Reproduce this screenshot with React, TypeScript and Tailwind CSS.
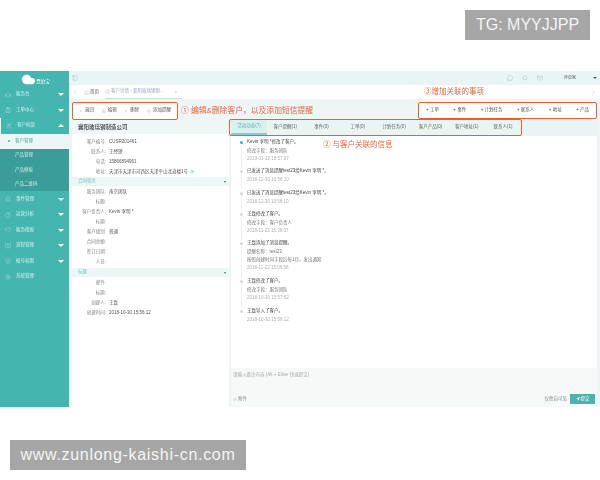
import React from 'react'
import { ArrowLeft, Bell, BookOpen, Cloud, FileText, Heart, Home, Mail, MapPin, MessageCircle, Paperclip, PanelLeft, PieChart, Send, Settings, ShieldCheck, SquarePen, Users, X, ChevronLeft, ChevronRight, ClipboardList, Headphones } from 'lucide-react'

const cjk = 'font-["Liberation_Sans","Noto_Sans_CJK_SC",sans-serif]'

const menuTop = [
  { icon: Headphones, label: '服务台' },
  { icon: ClipboardList, label: '工单中心' },
]
const menuBottom = [
  { icon: Bell, label: '事件管理', arrow: true },
  { icon: PieChart, label: '运营分析', arrow: true },
  { icon: Heart, label: '服务搜报', arrow: true },
  { icon: BookOpen, label: '流程管理', arrow: true },
  { icon: ShieldCheck, label: '帐号权限', arrow: true },
  { icon: Settings, label: '系统管理', arrow: false },
]
const subItems = ['产品管理', '产品模板', '产品二维码']

const Caret = ({ up }: { up?: boolean }) => (
  <span className={`ml-auto mr-[5px] h-0 w-0 border-x-[3px] border-x-transparent ${up ? 'border-b-[3px] border-b-white' : 'border-t-[3px] border-t-white'}`} />
)

function Sidebar() {
  const row = 'flex h-[15.5px] items-center pl-[5px] text-[4.5px] text-[#d6f0ee]'
  return (
    <div className="flex w-[69px] shrink-0 flex-col bg-[#45b5b0]">
      <div className="flex h-[16px] items-center justify-center pl-[2px] pt-[1px] text-[4.5px] text-white">
        <Cloud size={15} fill="#ffffff" strokeWidth={1} />
        <span className="mt-[5px]">票拍宝</span>
      </div>
      {menuTop.map((m) => (
        <div key={m.label} className={row}>
          <m.icon size={6} strokeWidth={1.2} />
          <span className="ml-[5px]">{m.label}</span>
          <Caret />
        </div>
      ))}
      <div className={`${row} border-l border-white`}>
        <Users size={6} strokeWidth={1.2} />
        <span className="ml-[5px]">客户档案</span>
        <Caret up />
      </div>
      <div className="flex h-[15px] items-center bg-[#eaf7f6] pl-[8px] text-[4.5px] text-[#4aa8a4]">
        <span className="mr-[5px] h-[2px] w-[2px] rounded-full bg-[#4aa8a4]" />
        客户管理
      </div>
      <div className="flex flex-col bg-[#3a9d99]">
        {subItems.map((s) => (
          <div key={s} className="flex h-[14.33px] items-center pl-[15px] text-[4.5px] text-[#cdeae8]">{s}</div>
        ))}
      </div>
      {menuBottom.map((m) => (
        <div key={m.label} className={row}>
          <m.icon size={6} strokeWidth={1.2} />
          <span className="ml-[5px]">{m.label}</span>
          {m.arrow && <Caret />}
        </div>
      ))}
    </div>
  )
}

function TopBars() {
  return (
    <>
      <div className="flex h-[14px] shrink-0 items-center bg-[#e9f5f4] pl-[3px] text-[#8a9a99]">
        <PanelLeft size={6} strokeWidth={1} />
        <div className="ml-auto flex items-center gap-[9px]">
          <MessageCircle size={6} strokeWidth={1} />
          <Bell size={6} strokeWidth={1} />
          <Mail size={6} strokeWidth={1} />
        </div>
        <span className="ml-[21px] text-[4px] text-[#555]">孙启家</span>
        <span className="ml-[17px] mr-[3px] h-0 w-0 border-x-[2px] border-t-[2px] border-x-transparent border-t-[#555]" />
      </div>
      <div className="flex h-[14px] shrink-0 items-center bg-white pl-[3px] pr-[3px] text-[#888]">
        <ChevronLeft size={6} strokeWidth={1} />
        <Home size={5} strokeWidth={1} className="ml-[6px]" />
        <span className="ml-[1px] text-[4.5px] text-[#555]">首页</span>
        <div className="ml-[6px] flex h-full w-[77px] items-center border-b border-[#bfe3e1] text-[4.5px] text-[#9ab]">
          <FileText size={5} strokeWidth={1} />
          <span className="ml-[1px]">客户详情 - 襄阳玻璃钢制...</span>
          <span className="ml-auto mr-[5px] text-[4px]">×</span>
        </div>
        <span className="ml-[242px] text-[7.5px] text-[#e0683c]">③增加关联的事项</span>
        <ChevronRight size={7} strokeWidth={1} className="ml-auto" />
      </div>
    </>
  )
}

function Toolbar() {
  const left = [
    { icon: ArrowLeft, label: '返回' },
    { icon: SquarePen, label: '编辑' },
    { icon: X, label: '删除' },
    { icon: Bell, label: '添加提醒' },
  ]
  const right = ['工单', '事件', '计划任务', '联系人', '地址', '产品']
  return (
    <div className="mt-[3px] flex h-[17px] shrink-0 items-center pl-[3px] pr-[3px]">
      <div className="flex h-[18px] w-[106px] items-center justify-between rounded-[2px] border-[1.5px] border-[#e8602e] bg-white px-[6px] text-[4.5px] text-[#555]">
        {left.map((b) => (
          <span key={b.label} className="flex items-center gap-[2px]">
            <b.icon size={4} strokeWidth={1} />
            {b.label}
          </span>
        ))}
      </div>
      <span className="ml-[3px] text-[7.8px] text-[#e0683c]">① 编辑&删除客户，以及添加短信提醒</span>
      <div className="ml-auto flex h-[17px] w-[179px] items-center justify-between rounded-[2px] border-[1.5px] border-[#e8602e] bg-white px-[7px] text-[4.5px] text-[#555]">
        {right.map((b) => (
          <span key={b}>+ {b}</span>
        ))}
      </div>
    </div>
  )
}

const fieldsA = [
  ['客户编号:', 'CUSR201461'],
  ['联系人:', '王经理'],
  ['电话:', '15866894961'],
  ['地址:', '天津市天津市河西区天津平山北道楼1号'],
]
const fieldsB = [
  ['服务团队:', '南京团队'],
  ['标题:', ''],
  ['客户负责人:', 'Kevin 李明 *'],
  ['标题:', ''],
  ['客户级别:', '普通'],
  ['合同金额:', ''],
  ['签订日期:', ''],
  ['人员:', ''],
]
const fieldsC = [
  ['邮件:', ''],
  ['标题:', ''],
  ['创建人:', '王磊'],
  ['创建时间:', '2018-10-30 15:56:12'],
]

function Fields({ rows }: { rows: string[][] }) {
  return (
    <div className="flex flex-col">
      {rows.map(([k, v], i) => (
        <div key={i} className="flex h-[10px] items-center text-[4.5px]">
          <span className="w-[34px] text-right text-[#888]">{k}</span>
          <span className="ml-[3px] flex items-center gap-[2px] text-[#555]">
            {v}
            {k === '地址:' && <MapPin size={4} className="text-[#45b5b0]" />}
          </span>
        </div>
      ))}
    </div>
  )
}

function Band({ label }: { label: string }) {
  return (
    <div className="flex h-[9px] items-center justify-between bg-[#eaf7f5] pl-[6px] pr-[3px] text-[4.5px] text-[#7cc4bf]">
      {label}
      <span className="h-0 w-0 border-x-[1.5px] border-t-[2px] border-x-transparent border-t-[#666]" />
    </div>
  )
}

function CustomerPanel() {
  return (
    <div className="mt-[1px] flex w-[157px] shrink-0 flex-col bg-white">
      <div className="flex h-[14px] items-center bg-[#eef7f6] pl-[6px] text-[5.5px] font-bold text-[#555]">襄阳玻璃钢制造公司</div>
      <div className="h-[3px]" />
      <Fields rows={fieldsA} />
      <Band label="合同相关" />
      <div className="h-[1.5px]" />
      <Fields rows={fieldsB} />
      <div className="h-[0.5px]" />
      <Band label="标题" />
      <div className="h-[1.5px]" />
      <Fields rows={fieldsC} />
    </div>
  )
}

const tabs = ['活动动态(7)', '客户提醒(1)', '事件(0)', '工单(0)', '计划任务(0)', '客户产品(0)', '客户地址(1)', '联系人(1)']

const timeline = [
  { title: 'Kevin 李明 *修改了客户。', lines: ['修改字段：服务团队'], date: '2019-01-12 18:57:07', h: 'h-[29px]' },
  { title: '已发送了消息提醒test23给Kevin 李明 *。', lines: [], date: '2018-12-30 10:58:10', h: 'h-[22px]' },
  { title: '已发送了消息提醒test23给Kevin 李明 *。', lines: [], date: '2018-11-30 10:58:10', h: 'h-[21px]' },
  { title: '王磊修改了客户。', lines: ['修改字段：客户负责人'], date: '2018-11-22 15:36:07', h: 'h-[29px]' },
  { title: '王磊添加了消息提醒。', lines: ['提醒名称：test23', '按照创建时间字段后每1月，发出通知'], date: '2018-11-22 15:09:58', h: 'h-[38px]' },
  { title: '王磊修改了客户。', lines: ['修改字段：服务团队'], date: '2018-10-30 15:57:52', h: 'h-[30px]' },
  { title: '王磊导入了客户。', lines: [], date: '2018-10-30 15:56:12', h: 'h-[16px]' },
]

function ActivityPanel() {
  return (
    <div className="relative ml-[2px] flex min-w-0 flex-1 flex-col bg-white">
      <div className="flex h-[17px] shrink-0 items-stretch bg-[#e8f5f4]">
        <div className="-ml-[2px] flex w-[293px] items-stretch justify-between rounded-[2px] border-[1.5px] border-[#e8602e] pl-[1px] text-[4.5px] text-[#666]">
          {tabs.map((t, i) => (
            <span key={t} className={`flex w-[36px] items-center justify-center ${i === 0 ? 'border-b-2 border-b-[#7fd0cb] bg-[#d9f0ee] text-[#5bb5b0]' : ''}`}>{t}</span>
          ))}
        </div>
      </div>
      <div className="flex flex-1 flex-col pl-[4px] pt-[3px]">
        {timeline.map((e, i) => (
          <div key={i} className={`flex ${e.h}`}>
            <div className="flex w-[12px] shrink-0 flex-col items-center">
              <span className={`mt-[1.5px] h-[3px] w-[3px] shrink-0 rounded-full ${i === 0 ? 'bg-[#45b5b0]' : 'bg-[#d5d9d9]'}`} />
              {i < timeline.length - 1 && <span className="w-px flex-1 bg-[#eef0f0]" />}
            </div>
            <div className="flex flex-col">
              <span className="h-[8px] text-[4.5px] leading-[6px] text-[#444]">{e.title}</span>
              {e.lines.map((l) => (
                <span key={l} className="h-[8px] text-[4.5px] leading-[8px] text-[#777]">{l}</span>
              ))}
              <span className="h-[8px] text-[4.5px] leading-[8px] text-[#b0b0b0]">{e.date}</span>
            </div>
          </div>
        ))}
      </div>
      <div className="flex h-[39px] shrink-0 flex-col bg-[#f7f8f8] pl-[2px] pr-[2px]">
        <span className="mt-[4px] text-[4.5px] text-[#aaa]">请输入备注内容 (Alt + Enter 快速提交)</span>
        <div className="mb-[3px] mt-auto flex items-center text-[4.5px] text-[#888]">
          <Paperclip size={4} strokeWidth={1} />
          <span className="ml-[1px]">附件</span>
          <span className="ml-auto mr-[3px]">仅他自可见</span>
          <span className="flex h-[10px] w-[25px] items-center justify-center gap-[1px] bg-[#45b5b0] text-white">
            <Send size={4} fill="#ffffff" strokeWidth={1} />
            提交
          </span>
        </div>
      </div>
      {/* 标注文字，盖在时间线上 */}
      <span className="absolute left-[92px] top-[20px] text-[7.5px] text-[#e0683c]">② 与客户关联的信息</span>
    </div>
  )
}

export default function App() {
  return (
    <div className={`flex h-[480px] w-[600px] flex-col overflow-hidden bg-white ${cjk}`}>
      <div className="flex h-[71px] shrink-0 justify-end pr-[10px] pt-[10px]">
        <div className="flex h-[30px] w-[125px] items-center justify-center bg-[#a6a6a6] text-[16px] text-[#f4f4f4]">TG: MYYJJPP</div>
      </div>
      <div className="flex h-[336px] shrink-0 overflow-hidden bg-[#eef5f4] blur-[0.5px]">
        <Sidebar />
        <div className="flex min-w-0 flex-1 flex-col">
          <TopBars />
          <Toolbar />
          <div className="flex min-h-0 flex-1 pl-[3px] pr-[3px]">
            <CustomerPanel />
            <ActivityPanel />
          </div>
        </div>
      </div>
      <div className="ml-[10px] mt-[33px] flex h-[30px] w-[236px] items-center justify-center bg-[#a6a6a6] text-[16px] tracking-[0.7px] text-[#f4f4f4]">www.zunlong-kaishi-cn.com</div>
    </div>
  )
}
